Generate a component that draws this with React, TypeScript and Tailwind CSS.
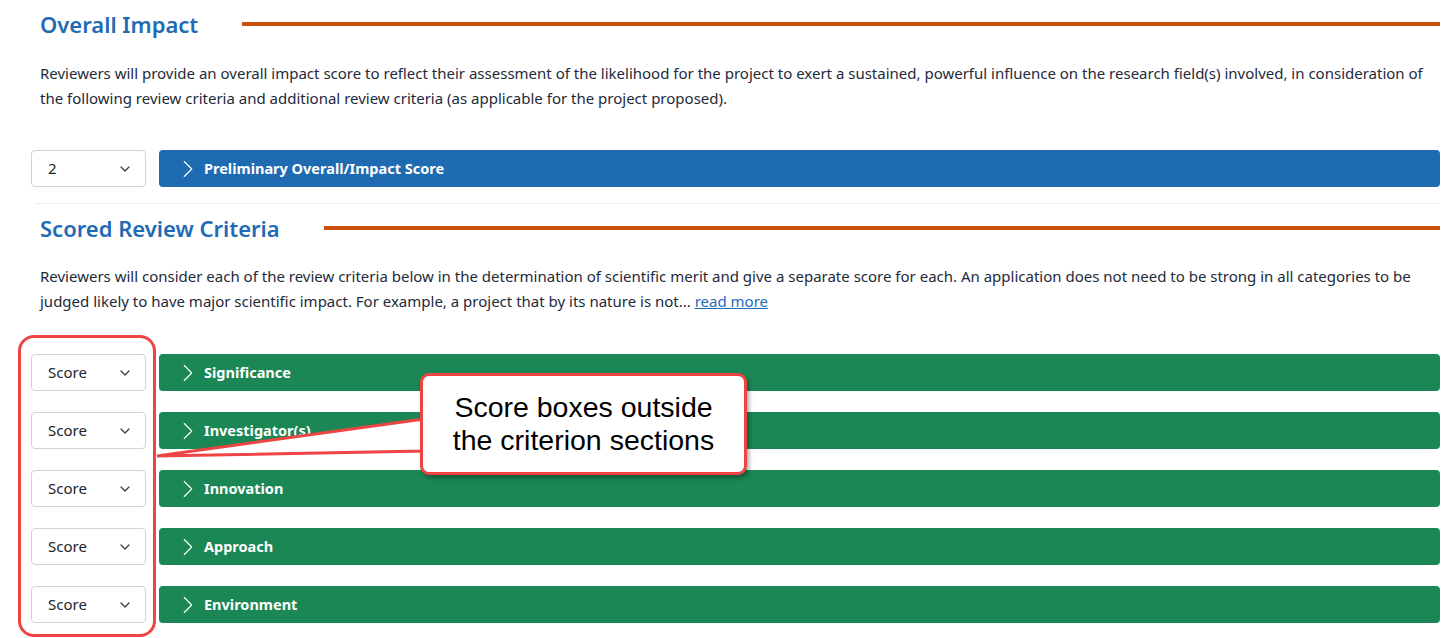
import { ChevronDown, ChevronRight } from 'lucide-react';

const CRITERIA = ['Significance', 'Investigator(s)', 'Innovation', 'Approach', 'Environment'];

function ScoreSelect({ value }: { value: string }) {
  return (
    <div className="w-[115px] h-[37px] shrink-0 border border-[#ced4da] rounded-[4px] bg-white flex items-center justify-between pl-[16px] pr-[12px] text-[15px] text-[#212529]">
      <span>{value}</span>
      <ChevronDown size={16} strokeWidth={1.8} className="text-[#343a40]" />
    </div>
  );
}

function Bar({ label, color }: { label: string; color: string }) {
  return (
    <div className={`flex-1 h-[37px] rounded-[4px] flex items-center pl-[14px] text-white text-[14.5px] font-bold ${color}`}>
      <ChevronRight size={30} strokeWidth={0.9} className="mr-[1px]" />
      <span>{label}</span>
    </div>
  );
}

function SectionHeading({ title }: { title: string }) {
  return (
    <div className="flex items-center pl-[40px] h-[36px]">
      <h2 className="text-[22px] font-semibold text-[#1f6bb5] whitespace-nowrap">{title}</h2>
      <div className="flex-1 h-[4px] bg-[#c9500a] ml-[44px]" />
    </div>
  );
}

export default function App() {
  return (
    <div className="relative w-[1453px] h-[638px] overflow-hidden bg-white pr-[13px] text-[#212529]" style={{ fontFamily: '"Noto Sans", "Open Sans", sans-serif' }}>
      <div className="pt-[6px]">
        <SectionHeading title="Overall Impact" />
        <p className="pl-[40px] pr-[10px] mt-[19px] text-[15px] leading-[25px] text-[#1e2a3a]">
          Reviewers will provide an overall impact score to reflect their assessment of the likelihood for the project to exert a sustained, powerful influence on the research field(s) involved, in consideration of the following review criteria and additional review criteria (as applicable for the project proposed).
        </p>
        <div className="flex gap-[13px] pl-[31px] mt-[39px]">
          <ScoreSelect value="2" />
          <Bar label="Preliminary Overall/Impact Score" color="bg-[#1f6bb1]" />
        </div>
        <div className="ml-[35px] mt-[16px] h-px bg-[#eeeeee]" />
        <div className="mt-[6px]">
          <SectionHeading title="Scored Review Criteria" />
        </div>
        <p className="pl-[40px] pr-[10px] mt-[18px] text-[15px] leading-[25px] text-[#1e2a3a]">
          Reviewers will consider each of the review criteria below in the determination of scientific merit and give a separate score for each. An application does not need to be strong in all categories to be judged likely to have major scientific impact. For example, a project that by its nature is not...{' '}
          <a href="#" className="text-[#1f6bb5] underline">read more</a>
        </p>
        <div className="flex flex-col gap-[21px] pl-[31px] mt-[40px]">
          {CRITERIA.map((c) => (
            <div key={c} className="flex gap-[13px]">
              <ScoreSelect value="Score" />
              <Bar label={c} color="bg-[#1a8754]" />
            </div>
          ))}
        </div>
      </div>

      {/* annotation: red box around score selects */}
      <div className="absolute left-[18px] top-[335px] w-[138px] h-[302px] border-[3px] border-[#ef4444] rounded-[16px]" />

      {/* callout tail */}
      <svg className="absolute left-0 top-0 pointer-events-none" width="1453" height="638">
        <polygon points="424,419 157,456 424,451" fill="white" stroke="#ef4444" strokeWidth="3" strokeLinejoin="miter" />
      </svg>

      {/* callout */}
      <div className="absolute left-[420px] top-[373px] w-[327px] h-[102px] bg-white border-[3px] border-[#ef4444] rounded-[9px] shadow-[2px_3px_4px_rgba(0,0,0,0.35)] flex flex-col items-center justify-center text-[28.5px] leading-[33px] text-black" style={{ fontFamily: '"Liberation Sans", Arial, sans-serif' }}>
        <span>Score boxes outside</span>
        <span>the criterion sections</span>
      </div>
      <svg className="absolute left-0 top-0 pointer-events-none" width="1453" height="638">
        <polygon points="426,421.5 426,448.5 428,448.5 428,421.5" fill="white" />
      </svg>
    </div>
  );
}
